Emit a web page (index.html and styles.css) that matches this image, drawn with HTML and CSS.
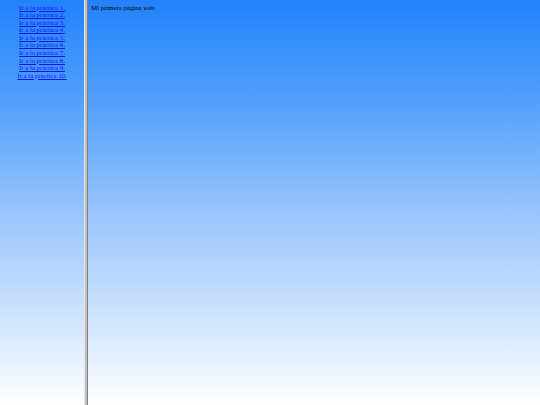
FILE: index.html
```html
<!DOCTYPE html>
<html lang="es">
<head>
<meta charset="utf-8">
<title>Mi primera página web</title>
<link rel="stylesheet" href="styles.css">
</head>
<body>
<div class="page">
  <nav class="menu">
    <a href="#">Ir a la práctica 1.</a>
    <a href="#">Ir a la práctica 2.</a>
    <a href="#">Ir a la práctica 3.</a>
    <a href="#">Ir a la práctica 4.</a>
    <a href="#">Ir a la práctica 5.</a>
    <a href="#">Ir a la práctica 6.</a>
    <a href="#">Ir a la práctica 7.</a>
    <a href="#">Ir a la práctica 8.</a>
    <a href="#">Ir a la práctica 9.</a>
    <a href="#">Ir a la práctica 10.</a>
  </nav>
  <div class="divider"></div>
  <main class="content">Mi primera página web</main>
</div>
</body>
</html>
```
FILE: styles.css
```css
html, body {
  margin: 0;
  height: 100%;
}
body {
  background: linear-gradient(to bottom, #2282fb 0%, #52a0fb 25%, #92c2fc 50%, #c8e0fd 75%, #ffffff 100%);
  font-family: "Liberation Serif", "Times New Roman", serif;
  font-size: 6.8px;
  line-height: 7.6px;
  color: #000;
}
.page {
  display: flex;
  height: 405px;
}
.menu {
  width: 84px;
  padding-top: 3.5px;
  display: flex;
  flex-direction: column;
  align-items: center;
}
.menu a {
  color: #1010ee;
  text-decoration: underline;
}
.divider {
  width: 4px;
  box-sizing: border-box;
  border-left: 1px solid #e6e6e6;
  border-right: 1px solid #808080;
  background: #c0c0c0;
}
.content {
  flex: 1;
  padding: 3.5px 3px 0 3px;
}
```
